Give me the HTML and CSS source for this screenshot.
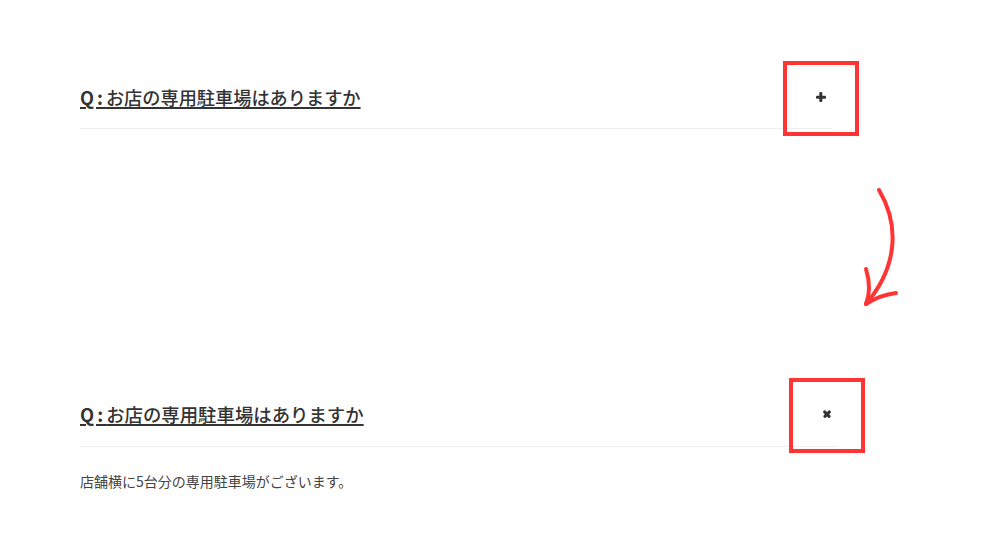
FILE: index.html
```html
<!DOCTYPE html>
<html lang="ja">
<head>
<meta charset="utf-8">
<title>FAQ</title>
<link rel="stylesheet" href="styles.css">
</head>
<body>
<main class="page">
  <section class="faq faq-closed">
    <div class="faq-head">
      <span class="faq-q"><span class="q-mark">Q:</span>お店の専用駐車場はありますか</span>
      <span class="toggle plus"><span class="hl"></span></span>
    </div>
  </section>

  <section class="faq faq-open">
    <div class="faq-head">
      <span class="faq-q"><span class="q-mark">Q:</span>お店の専用駐車場はありますか</span>
      <span class="toggle cross"><span class="hl"></span></span>
    </div>
    <p class="faq-a">店舗横に5台分の専用駐車場がございます。</p>
  </section>
</main>

<svg class="arrow" width="60" height="140" viewBox="850 180 60 140" xmlns="http://www.w3.org/2000/svg">
  <g fill="none" stroke="#ff3434" stroke-width="4" stroke-linecap="round" stroke-linejoin="round">
    <path d="M879 190 C 898 222, 900 264, 866 304"/>
    <path d="M866 269 Q 872 289 866 304"/>
    <path d="M866 304 Q 880 295 896 293"/>
  </g>
</svg>
</body>
</html>
```
FILE: styles.css
```css
* { box-sizing: border-box; }

html, body {
  margin: 0;
  padding: 0;
  background: #fff;
}

body {
  width: 1000px;
  height: 550px;
  overflow: hidden;
  font-family: "Noto Sans CJK JP", "Noto Sans", sans-serif;
  color: #333;
  position: relative;
}

.page {
  padding: 69px 0 0 80px;
}

.faq-closed { width: 752px; }
.faq-open { width: 758px; margin-top: 257px; }

.faq-head {
  display: flex;
  align-items: center;
  justify-content: space-between;
  padding: 14px 0 17px;
  border-bottom: 1px solid #eeeeee;
  line-height: 28px;
}

.faq-open .faq-head { padding-bottom: 18px; }

.faq-q {
  font-size: 18.2px;
  font-weight: 500;
  color: #333;
  text-decoration: underline;
  text-decoration-thickness: 1.5px;
  text-underline-offset: 2px;
}

.faq-open .faq-q { font-size: 18.4px; }

.q-mark {
  font-weight: 700;
  letter-spacing: 3px;
}

.toggle {
  position: relative;
  width: 22px;
  height: 22px;
  display: block;
}

.toggle::before,
.toggle::after {
  content: "";
  position: absolute;
  left: 50%;
  top: 50%;
  width: 10px;
  height: 2.6px;
  background: #333;
  border-radius: 1px;
  transform: translate(-50%, -50%);
}

.toggle::after { transform: translate(-50%, -50%) rotate(90deg); }

.toggle.cross::before { transform: translate(-50%, -50%) rotate(45deg); width: 9px; }
.toggle.cross::after { transform: translate(-50%, -50%) rotate(-45deg); width: 9px; }

.hl {
  position: absolute;
  left: -27px;
  top: -25px;
  width: 76px;
  height: 75px;
  border: 4px solid #ff3434;
}

.faq-a {
  margin: 24px 0 0;
  font-size: 14px;
  line-height: 20px;
  color: #444;
  font-weight: 400;
}

.arrow {
  position: absolute;
  left: 850px;
  top: 180px;
}
```
